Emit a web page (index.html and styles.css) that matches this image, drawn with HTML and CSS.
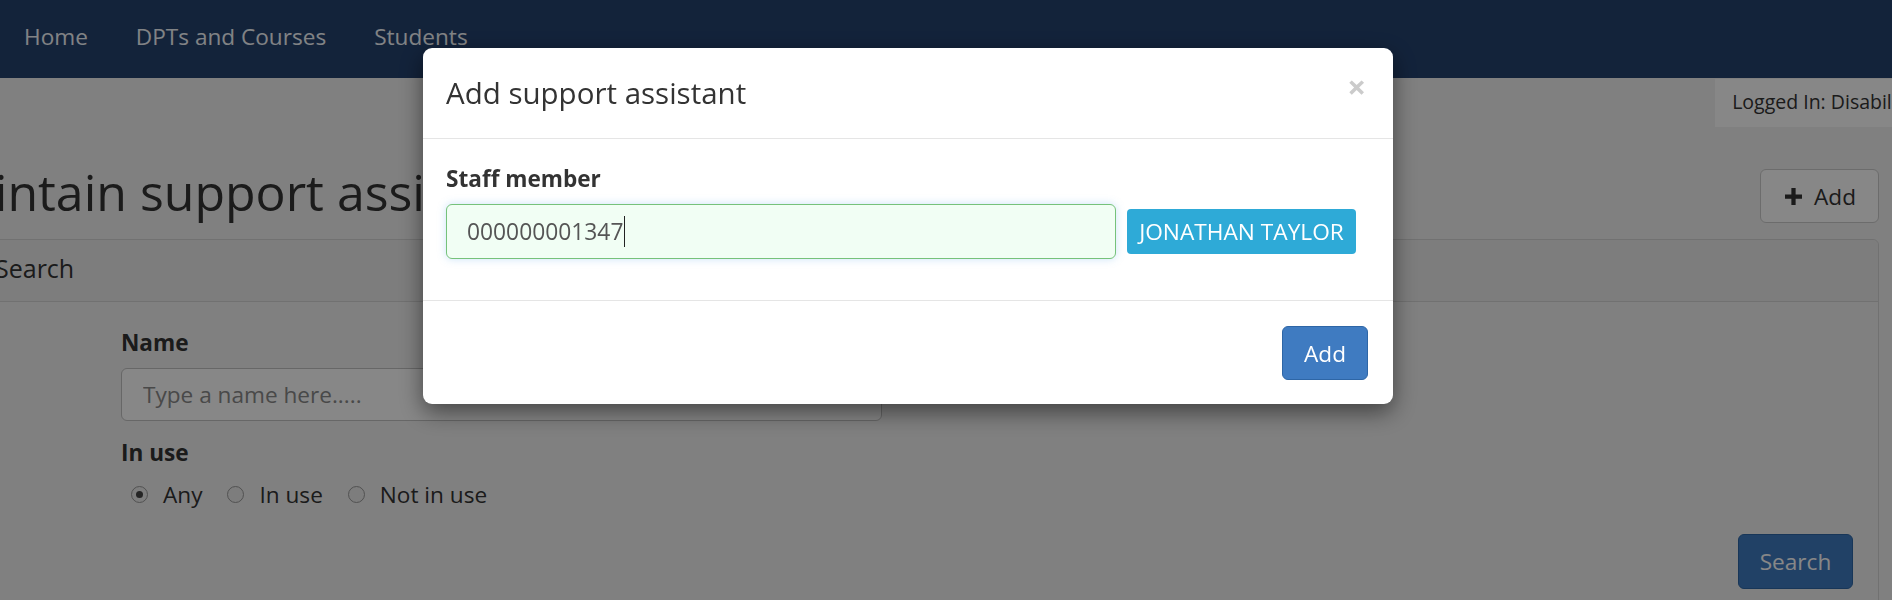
FILE: index.html
```html
<!DOCTYPE html>
<html lang="en">
<head>
<meta charset="utf-8">
<title>Maintain support assistants</title>
<link rel="stylesheet" href="styles.css">
</head>
<body>
<nav class="navbar">
  <ul class="nav">
    <li><a href="#">Home</a></li>
    <li><a href="#">DPTs and Courses</a></li>
    <li><a href="#">Students</a></li>
  </ul>
</nav>

<div class="userbar">
  <div class="logged">Logged In: Disability Office</div>
</div>

<main class="page">
  <div class="title-row">
    <h1>Maintain support assistants</h1>
    <button class="btn btn-default btn-add" type="button">
      <svg class="plus" viewBox="0 0 16 16" width="17" height="17" aria-hidden="true"><path d="M6 0h4v6h6v4h-6v6H6v-6H0V6h6z" fill="#333"/></svg>
      <span>Add</span>
    </button>
  </div>

  <section class="panel">
    <div class="panel-heading">Search</div>
    <div class="panel-body">
      <div class="search-form">
        <label class="control-label">Name</label>
        <input class="form-control name-input" type="text" placeholder="Type a name here.....">
        <label class="control-label inuse-label">In use</label>
        <div class="radios">
          <label class="radio"><span class="radio-dot checked"></span>Any</label>
          <label class="radio"><span class="radio-dot"></span>In use</label>
          <label class="radio"><span class="radio-dot"></span>Not in use</label>
        </div>
        <div class="form-actions">
          <button class="btn btn-primary btn-search" type="button">Search</button>
        </div>
      </div>
    </div>
  </section>
</main>

<div class="backdrop"></div>

<div class="modal" role="dialog">
  <div class="modal-header">
    <h4 class="modal-title">Add support assistant</h4>
    <span class="close">×</span>
  </div>
  <div class="modal-body">
    <label class="control-label">Staff member</label>
    <div class="staff-row">
      <div class="staff-input"><span class="caret-text">000000001347</span></div>
      <span class="name-label">JONATHAN TAYLOR</span>
    </div>
  </div>
  <div class="modal-footer">
    <button class="btn btn-primary btn-modal-add" type="button">Add</button>
  </div>
</div>
</body>
</html>
```

FILE: styles.css
```css
* { box-sizing: border-box; }

html, body {
  margin: 0;
  height: 600px;
  overflow: hidden;
}

body {
  font-family: "Open Sans", "DejaVu Sans", sans-serif;
  font-size: 22.6px;
  line-height: 31px;
  color: #333;
  background: #f2f2f2;
}

/* ---------- navbar ---------- */
.navbar {
  height: 78px;
  background: #24426f;
  display: flex;
  align-items: center;
}
.nav {
  list-style: none;
  margin: 0;
  padding: 0;
  display: flex;
}
.nav a {
  display: block;
  padding: 0 24px;
  color: #f4f7fb;
  text-decoration: none;
  font-size: 22.6px;
  line-height: 78px;
  margin-top: -4px;
}

/* ---------- user bar ---------- */
.userbar {
  display: flex;
  justify-content: flex-end;
  margin-right: -97px;
  padding-top: 1px;
}
.logged {
  height: 48px;
  line-height: 46px;
  padding: 0 17px;
  background: #ffffff;
  font-size: 19.5px;
  white-space: nowrap;
}

/* ---------- page ---------- */
.page {
  margin-left: -30px;
  width: 1909px;
}
.title-row {
  display: flex;
  justify-content: space-between;
  align-items: flex-start;
  height: 112px;
}
h1 {
  margin: 0 0 0 -48px;
  font-size: 50px;
  font-weight: 400;
  line-height: 50px;
  padding-top: 40px;
  white-space: nowrap;
  color: #333;
}

.btn {
  font-family: inherit;
  font-size: 22.6px;
  border-radius: 6px;
  border: 1px solid transparent;
  cursor: pointer;
}
.btn-default {
  background: #fff;
  border-color: #ccc;
  color: #333;
}
.btn-primary {
  background: #3f7bc1;
  border-color: #2e66a6;
  color: #fff;
}
.btn-add {
  margin-top: 42px;
  width: 119px;
  height: 54px;
  display: flex;
  align-items: center;
  justify-content: center;
  gap: 12px;
  padding: 0 0 0 2px;
}
.plus { display: block; }

.panel {
  border: 1px solid #d5d5d5;
  border-radius: 6px;
  background: #f2f2f2;
}
.panel-heading {
  height: 62px;
  line-height: 57px;
  padding: 0 24px;
  background: #ececec;
  border-bottom: 1px solid #d5d5d5;
  font-size: 25px;
  border-radius: 6px 6px 0 0;
}
.panel-body {
  padding: 25px 25px 30px 150px;
}
.control-label {
  display: block;
  font-weight: 700;
  font-size: 22.6px;
  line-height: 31px;
  margin-bottom: 10px;
}
.name-input {
  display: block;
  width: 761px;
  height: 53px;
  border: 1px solid #c2c2c2;
  border-radius: 6px;
  background: #fff;
  padding: 0 21px;
  font-family: inherit;
  font-size: 22.6px;
  color: #555;
}
.name-input::placeholder { color: #8a8a8a; }
.inuse-label { margin-top: 16px; margin-bottom: 11px; }
.radios {
  display: flex;
  gap: 25px;
  padding-left: 10px;
}
.radio {
  display: flex;
  align-items: center;
  gap: 15px;
  line-height: 31px;
}
.radio-dot {
  width: 17px;
  height: 17px;
  border-radius: 50%;
  border: 1px solid #9a9a9a;
  background: #ececec;
  position: relative;
}
.radio-dot.checked::after {
  content: "";
  position: absolute;
  left: 4px; top: 4px;
  width: 7px; height: 7px;
  border-radius: 50%;
  background: #444;
}
.form-actions {
  display: flex;
  justify-content: flex-end;
  margin-top: 24px;
}
.btn-search {
  width: 115px;
  height: 55px;
}

/* ---------- backdrop ---------- */
.backdrop {
  position: fixed;
  inset: 0;
  background: rgba(0, 0, 0, 0.47);
}

/* ---------- modal ---------- */
.modal {
  position: fixed;
  top: 48px;
  left: 423px;
  width: 970px;
  background: #fff;
  border-radius: 9px;
  box-shadow: 0 8px 23px rgba(0, 0, 0, 0.5);
}
.modal-header {
  height: 91px;
  border-bottom: 1px solid #e5e5e5;
  padding: 0 24px 0 23px;
  display: flex;
  align-items: center;
  justify-content: space-between;
}
.modal-title {
  margin: 0;
  font-size: 29.5px;
  font-weight: 400;
  line-height: 40px;
  color: #333;
}
.close {
  font-size: 33px;
  font-weight: 700;
  color: #cbcbcb;
  line-height: 1;
  margin-right: 3px;
  margin-top: -14px;
}
.modal-body {
  padding: 24px 24px 41px 23px;
}
.modal-body .control-label { margin-bottom: 10px; }
.staff-row {
  display: flex;
  align-items: center;
  gap: 11px;
}
.staff-input {
  width: 670px;
  height: 55px;
  border: 1px solid #76c27a;
  border-radius: 6px;
  background: #f1fef4;
  box-shadow: 0 0 8px rgba(102, 175, 233, 0.35);
  padding: 0 20px;
  display: flex;
  align-items: center;
  font-size: 22.8px;
  color: #555;
}
.caret-text {
  border-right: 1px solid #222;
  line-height: 31px;
  padding-right: 1px;
}
.name-label {
  display: inline-block;
  width: 229px;
  height: 45px;
  line-height: 45px;
  text-align: center;
  background: #2eaad7;
  color: #fff;
  border-radius: 4px;
  font-size: 22.7px;
  white-space: nowrap;
}
.modal-footer {
  border-top: 1px solid #e5e5e5;
  padding: 25px 25px 24px;
  display: flex;
  justify-content: flex-end;
}
.btn-modal-add {
  width: 86px;
  height: 54px;
  padding: 0;
}
```
